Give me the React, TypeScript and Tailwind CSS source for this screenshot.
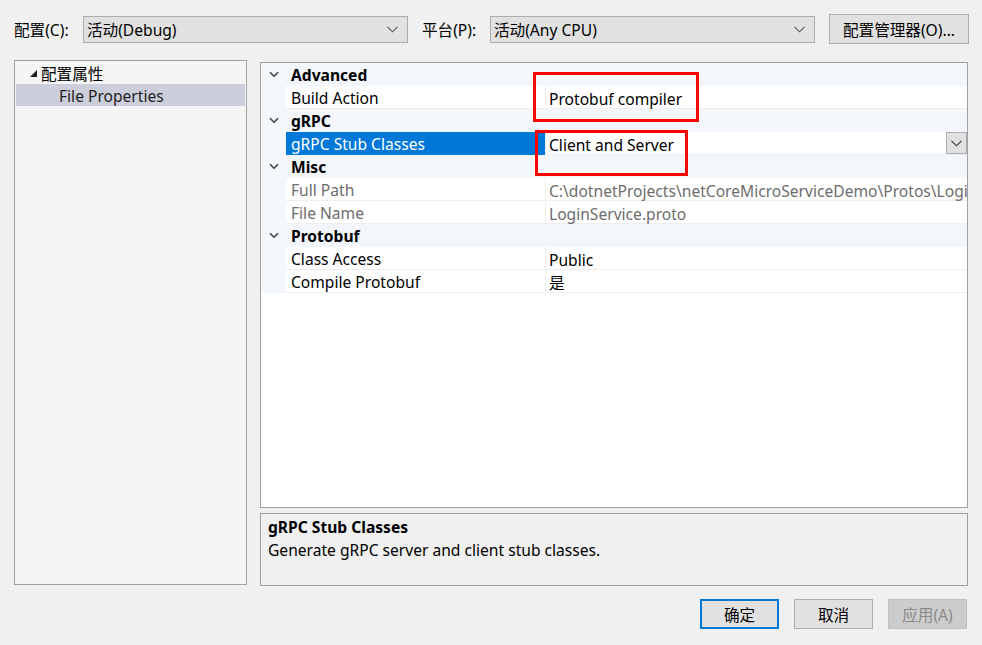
import React from "react";

const FONT = "font-['Noto_Sans','Noto_Sans_CJK_SC',sans-serif]";

function Chevron({ className = "" }: { className?: string }) {
  return (
    <svg width="11" height="7" viewBox="0 0 11 7" className={className}>
      <path d="M0.5 0.8 L5.5 5.8 L10.5 0.8" fill="none" stroke="currentColor" strokeWidth="1.1" />
    </svg>
  );
}

function Combo({ text, width }: { text: string; width: string }) {
  return (
    <div
      className={`${width} h-[27px] flex items-center justify-between bg-[#e1e1e1] border border-[#adadad] pl-[3px] pr-[9px]`}
    >
      <span className="pt-[3px]">{text}</span>
      <Chevron className="text-[#555]" />
    </div>
  );
}

type Row =
  | { kind: "cat"; label: string }
  | { kind: "prop"; name: string; value: string; gray?: boolean; selected?: boolean; dropdown?: boolean };

const rows: Row[] = [
  { kind: "cat", label: "Advanced" },
  { kind: "prop", name: "Build Action", value: "Protobuf compiler" },
  { kind: "cat", label: "gRPC" },
  { kind: "prop", name: "gRPC Stub Classes", value: "Client and Server", selected: true, dropdown: true },
  { kind: "cat", label: "Misc" },
  {
    kind: "prop",
    name: "Full Path",
    value: "C:\\dotnetProjects\\netCoreMicroServiceDemo\\Protos\\LoginService.proto",
    gray: true,
  },
  { kind: "prop", name: "File Name", value: "LoginService.proto", gray: true },
  { kind: "cat", label: "Protobuf" },
  { kind: "prop", name: "Class Access", value: "Public" },
  { kind: "prop", name: "Compile Protobuf", value: "是" },
];

function GridRow({ row }: { row: Row }) {
  if (row.kind === "cat") {
    return (
      <div className="h-[23px] flex items-center bg-[#f3f6fb]">
        <div className="w-[25px] flex justify-center pl-[1px]">
          <svg width="10" height="7" viewBox="0 0 10 7" className="text-[#404040]">
            <path d="M1 1.2 L5 5.2 L9 1.2" fill="none" stroke="currentColor" strokeWidth="1.6" />
          </svg>
        </div>
        <span className="pl-[5px] pt-[3px] font-bold">{row.label}</span>
      </div>
    );
  }
  return (
    <div className="h-[23px] flex bg-[#f3f6fb]">
      <div className="w-[25px] shrink-0" />
      <div
        className={`w-[259px] shrink-0 flex items-center pl-[5px] pt-[3px] border-b ${
          row.selected
            ? "bg-[#0078d7] text-white border-[#0078d7]"
            : `bg-white border-[#eeeeee] ${row.gray ? "text-[#6d6d6d]" : ""}`
        }`}
      >
        {row.name}
      </div>
      <div
        className={`flex-1 min-w-0 flex items-center bg-white border-l border-b border-[#eeeeee] ${
          row.gray ? "text-[#6d6d6d]" : ""
        }`}
      >
        <span className="pl-[3px] pt-[3px] whitespace-nowrap overflow-hidden flex-1 leading-[20px]">{row.value}</span>
        {row.dropdown && (
          <div className="w-[21px] h-[22px] flex items-center justify-center bg-[#e1e1e1] border border-[#adadad]">
            <Chevron className="text-[#333]" />
          </div>
        )}
      </div>
    </div>
  );
}

export default function App() {
  return (
    <div className={`relative w-[982px] h-[645px] bg-[#f0f0f0] text-[15.6px] text-black leading-none ${FONT}`}>
      {/* top bar */}
      <div className="flex items-center h-[30px] pt-[14px] box-content pl-[14px]">
        <span className="w-[69px] pt-[3px]">配置(C):</span>
        <Combo text="活动(Debug)" width="w-[325px]" />
        <span className="ml-[14px] w-[68px] pt-[3px]">平台(P):</span>
        <Combo text="活动(Any CPU)" width="w-[325px]" />
        <button className="ml-[14px] w-[140px] h-[30px] pt-[3px] bg-[#e1e1e1] border border-[#adadad]">
          配置管理器(O)...
        </button>
      </div>

      {/* main */}
      <div className="flex pl-[14px] pt-[16px]">
        <div className="w-[233px] h-[525px] border border-[#a0a0a0] bg-[#f5f5f5] pt-[1px] px-[1px]">
          <div className="h-[22px] flex items-center">
            <svg width="7" height="7" viewBox="0 0 7 7" className="ml-[14px] mt-[1px]">
              <polygon points="7,0 7,7 0,7" fill="#1e1e1e" />
            </svg>
            <span className="ml-[4px] pt-[3px]">配置属性</span>
          </div>
          <div className="h-[22px] flex items-center bg-[#cccedb] pl-[43px] pt-[3px] text-[#1e1e1e]">
            File Properties
          </div>
        </div>

        <div className="ml-[13px] mt-[2px] flex flex-col">
          <div className="w-[708px] h-[446px] border border-[#a0a0a0] bg-white overflow-hidden">
            {rows.map((r, i) => (
              <GridRow key={i} row={r} />
            ))}
          </div>
          <div className="mt-[5px] w-[708px] h-[73px] border border-[#a0a0a0] bg-[#f0f0f0] pl-[7px] pt-[3px]">
            <div className="font-bold h-[18px] pt-[3px] flex items-center">gRPC Stub Classes</div>
            <div className="mt-[5px] h-[18px] pt-[3px] flex items-center">
              Generate gRPC server and client stub classes.
            </div>
          </div>
        </div>
      </div>

      {/* buttons */}
      <div className="flex justify-end gap-[15px] pr-[15px] mt-[13px]">
        <button className="w-[79px] h-[30px] pt-[3px] bg-[#e1e1e1] border-2 border-[#0078d7]">确定</button>
        <button className="w-[79px] h-[30px] pt-[3px] bg-[#e1e1e1] border border-[#adadad]">取消</button>
        <button className="w-[79px] h-[30px] pt-[3px] bg-[#cccccc] border border-[#bfbfbf] text-[#8a8a8a]">
          应用(A)
        </button>
      </div>

      {/* red annotation boxes */}
      <div className="absolute left-[533px] top-[72px] w-[166px] h-[50px] border-[3px] border-[#ff0000]" />
      <div className="absolute left-[535px] top-[130px] w-[153px] h-[46px] border-[3px] border-[#ff0000]" />
    </div>
  );
}
